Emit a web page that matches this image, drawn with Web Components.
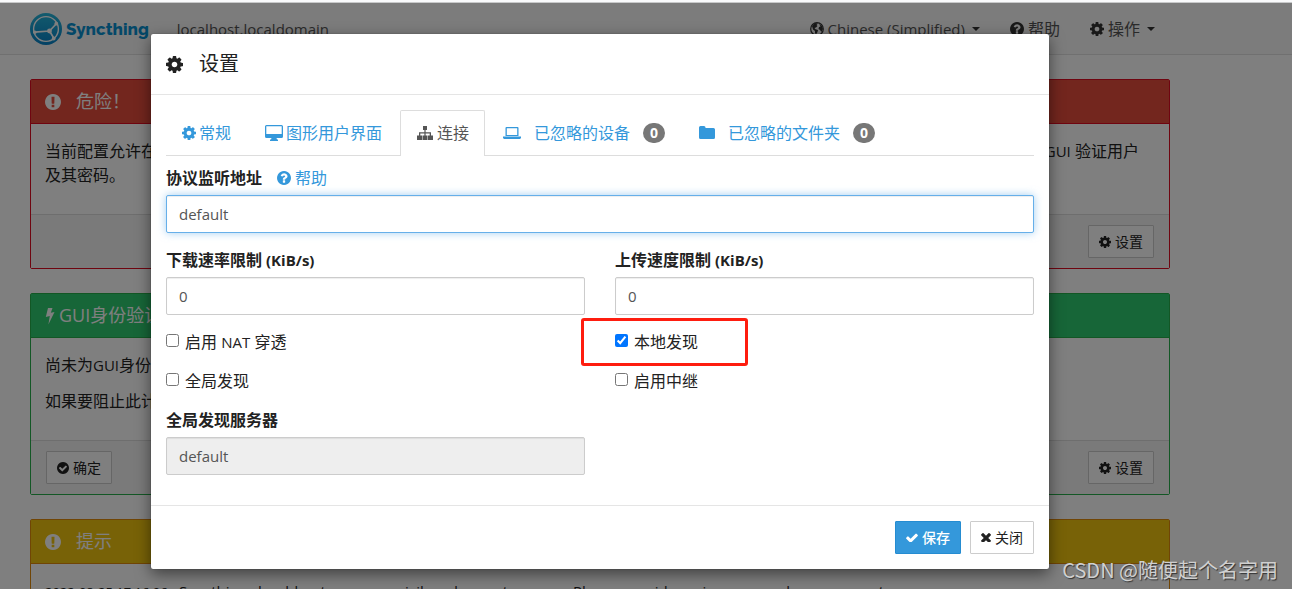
<!DOCTYPE html>
<html lang="zh-CN">
<head>
<meta charset="utf-8">
<title>Syncthing</title>
<style>
html, body { margin: 0; height: 100%; }
body { overflow: hidden; background: #fff; color: #222; font: 16px/24px "Open Sans", "Noto Sans CJK SC", sans-serif; }
</style>
</head>
<body>
<st-app></st-app>
<script>
const CIRCLE = 'M1664 896q0 209-103 385.500t-279.500 279.500-385.500 103-385.500-103-279.500-279.500-103-385.500 103-385.500 279.500-279.500 385.500-103 385.500 103 279.500 279.500 103 385.500z';
const ICONS = {
  cog: ['128 128 1536 1536', '<path d="M1152 896q0-106-75-181t-181-75-181 75-75 181 75 181 181 75 181-75 75-181zm512-109v222q0 12-8 23t-20 13l-185 28q-19 54-39 91 35 50 107 138 10 12 10 25t-9 23q-27 37-99 108t-94 71q-12 0-26-9l-138-108q-44 23-91 38-16 136-29 186-7 28-36 28h-222q-14 0-24.500-8.500t-11.500-21.500l-28-184q-49-16-90-37l-141 107q-10 9-25 9-14 0-25-11-126-114-165-168-7-10-7-23 0-12 8-23 15-21 51-66.500t54-70.500q-27-50-41-99l-183-27q-13-2-21-12.500t-8-23.500v-222q0-12 8-23t19-13l186-28q14-46 39-92-40-57-107-138-10-12-10-24 0-10 9-23 26-36 98.500-107.500t94.500-71.500q13 0 26 10l138 107q44-23 91-38 16-136 29-186 7-28 36-28h222q14 0 24.500 8.500t11.500 21.500l28 184q49 16 90 37l142-107q9-9 24-9 13 0 25 10 129 119 165 170 7 8 7 22 0 12-8 23-15 21-51 66.500t-54 70.500q26 50 41 98l183 28q13 2 21 12.500t8 23.500z"/>'],
  ok: ['128 128 1536 1536', '<path d="M1412 734q0-28-18-46l-91-90q-19-19-45-19t-45 19l-408 407-226-226q-19-19-45-19t-45 19l-91 90q-18 18-18 46 0 27 18 45l362 362q19 19 45 19 27 0 46-19l543-543q18-18 18-45z' + CIRCLE + '"/>'],
  help: ['128 128 1536 1536', '<path d="M1024 1376v-192q0-14-9-23t-23-9h-192q-14 0-23 9t-9 23v192q0 14 9 23t23 9h192q14 0 23-9t9-23zm256-672q0-88-55.500-163t-138.500-116-170-41q-243 0-371 213-15 24 8 42l132 100q7 6 19 6 16 0 25-12 53-68 86-92 34-24 86-24 48 0 85.500 26t37.500 59q0 38-20 61t-68 45q-63 28-115.500 86.500t-52.500 125.500v36q0 14 9 23t23 9h192q14 0 23-9t9-23q0-19 21.500-49.500t54.500-49.500q32-18 49-28.500t46-35 44.500-48 28-60.500 12.500-81z' + CIRCLE + '"/>'],
  warn: ['128 128 1536 1536', '<path d="M1024 1375v-190q0-14-9-23.500t-22-9.500h-192q-13 0-23 10t-10 23v190q0 13 10 23t23 10h192q13 0 22-9.500t9-23.500zm-2-344l18-621q0-12-10-18-10-8-24-8h-220q-14 0-24 8-10 6-10 18l17 621q0 10 10 17.500t24 7.500h185q14 0 23.500-7.500t10.500-17.500z' + CIRCLE + '"/>'],
  check: ['110 250 1572 1300', '<path d="M1671 566q0 40-28 68l-724 724-136 136q-28 28-68 28t-68-28l-136-136-362-362q-28-28-28-68t28-68l136-136q28-28 68-28t68 28l294 295 656-657q28-28 68-28t68 28l136 136q28 28 28 68z"/>'],
  times: ['290 366 1212 1188', '<path d="M1490 1322q0 40-28 68l-136 136q-28 28-68 28t-68-28l-294-294-294 294q-28 28-68 28t-68-28l-136-136q-28-28-28-68t28-68l294-294-294-294q-28-28-28-68t28-68l136-136q28-28 68-28t68 28l294 294 294-294q28-28 68-28t68 28l136 136q28 28 28 68t-28 68l-294 294 294 294q28 28 28 68z"/>'],
  bolt: ['0 0 10 18', '<path d="M3 1h4.500L5.800 5.800 9.500 5 3.400 17.500 4.800 9 .8 10z"/>'],
  desktop: ['0 0 18 16', '<path fill-rule="evenodd" d="M1.500 0h15A1.500 1.500 0 0 1 18 1.500v10a1.500 1.500 0 0 1-1.500 1.500h-5l.5 1.500h1V16H5v-1.500h1l.5-1.500h-5A1.500 1.500 0 0 1 0 11.500v-10A1.500 1.500 0 0 1 1.500 0zM1.300 1.300v7.700h15.400V1.300z"/>'],
  sitemap: ['-1 0 18 14', '<path d="M6 0h4v4H8.600v2.300H14V9.500h2V14h-5V9.500h1.700V7.500H8.600v2h1.900V14h-5V9.500h1.900v-2H3.300v2H5V14H0V9.500h2V6.300h5.400V4H6z"/>'],
  laptop: ['0 0 18 12', '<path fill-rule="evenodd" d="M3.500 0h11a1 1 0 0 1 1 1v8h-13V1a1 1 0 0 1 1-1zM3.800 1.200V8h10.400V1.200zM0 9.500h18V11l-1 1H1l-1-1z"/>'],
  folder: ['0 0 16 14', '<path d="M1.500 0H5a1.500 1.500 0 0 1 1.500 1.500V2h8A1.500 1.500 0 0 1 16 3.500v8a1.500 1.500 0 0 1-1.500 1.500h-13A1.500 1.500 0 0 1 0 11.500v-10A1.500 1.500 0 0 1 1.500 0z"/>'],
  globe: ['0 0 14 14', '<circle cx="7" cy="7" r="6.300" fill="none" stroke="currentColor" stroke-width="1.200"/><path d="M2 4l3-3 3 .5L6.500 3l1 1L6 5.500 4.500 6l1 1.200L8 8l-.5 2L6 12.500 5 11V9L3 7.500zM9 2l3 2 1 3-1.500 3-1.500-2-1.500-1L9 5l1.500-.5z"/>'],
  caret: ['0 0 8 4', '<path d="M0 0h8L4 4z"/>']
};

function define(name, html, setup) {
  const template = document.createElement('template');
  template.innerHTML = html;
  customElements.define(name, class extends HTMLElement {
    connectedCallback() {
      if (this.shadowRoot) return;
      this.attachShadow({ mode: 'open' }).append(template.content.cloneNode(true));
      if (setup) setup(this, this.shadowRoot);
    }
  });
}

define('st-icon', `<style>
  :host { display: inline-flex; align-items: center; justify-content: center; width: var(--w, 14px); flex: none; }
  svg { display: block; width: 100%; fill: currentColor; }
</style><svg aria-hidden="true"></svg>`, (el, root) => {
  const [box, shape] = ICONS[el.getAttribute('name')];
  const svg = root.querySelector('svg');
  svg.setAttribute('viewBox', box);
  svg.innerHTML = shape;
});

define('st-button', `<style>
  :host { display: inline-flex; }
  button { display: flex; align-items: center; gap: 4px; margin: 0; padding: 5px 10px; border: 1px solid #ccc; border-radius: 1px; background: #fff; color: #222; font: inherit; font-size: 14px; line-height: 21px; }
  st-icon { --w: 12px; }
  st-icon[name=times] { --w: 10px; }
  :host([primary]) button { background: #3498db; border-color: #258cd1; color: #fff; font-weight: 500; }
</style><button type="button"><slot></slot></button>`, (el, root) => {
  const icon = document.createElement('st-icon');
  icon.setAttribute('name', el.getAttribute('icon'));
  root.querySelector('button').prepend(icon);
});

define('st-logo', `<style>
  :host { display: flex; align-items: center; gap: 4px; color: #0891d1; font: 800 17px/24px Raleway, "Open Sans", sans-serif; }
  svg { display: block; width: 32px; height: 32px; }
</style>
<svg viewBox="0 0 32 32" aria-hidden="true">
  <defs><linearGradient id="g" x1="0" y1="1" x2="0" y2="0"><stop offset="0" stop-color="#0882c8"/><stop offset="1" stop-color="#26b6db"/></linearGradient></defs>
  <circle cx="16" cy="16" r="16" fill="url(#g)"/>
  <g fill="none" stroke="#fff" stroke-width="1.400"><circle cx="16" cy="16" r="12.400"/><path d="M26.500 10.500 19.500 18 4.500 19.200M19.500 18l4.500 7.500" stroke-width="1.700"/></g>
  <g fill="#fff"><circle cx="19.500" cy="18" r="2.400"/><circle cx="26.300" cy="10.700" r="1.900"/><circle cx="4.800" cy="19.200" r="1.800"/><circle cx="23.700" cy="25.500" r="1.900"/></g>
</svg><span>Syncthing</span>`);

define('st-navbar', `<style>
  :host { display: block; background: #f8f8f8; border-bottom: 1px solid #e0e0e0; color: #555; }
  nav { display: flex; align-items: center; box-sizing: border-box; max-width: 1140px; height: 51px; margin-left: 30px; }
  a { display: flex; align-items: center; gap: 4px; color: inherit; text-decoration: none; }
  .host { margin: 0 auto 0 28px; font-size: 15px; }
  .links { display: flex; gap: 30px; padding-right: 15px; }
  .latin { font-size: 15px; }
  .links st-icon { color: #333; }
  .links st-icon[name=caret] { --w: 8px; margin-left: 3px; }
</style>
<nav>
  <a href="#"><st-logo></st-logo></a>
  <p class="host">localhost.localdomain</p>
  <div class="links">
    <a class="latin" href="#"><st-icon name="globe"></st-icon>Chinese (Simplified)<st-icon name="caret"></st-icon></a>
    <a href="#"><st-icon name="help"></st-icon>帮助</a>
    <a href="#"><st-icon name="cog"></st-icon>操作<st-icon name="caret"></st-icon></a>
  </div>
</nav>`);

define('st-panel', `<style>
  :host { display: block; border: 1px solid var(--edge); border-radius: 2px; background: #fff; --edge: #df0b20; --fill: #e74c3c; }
  :host([kind=success]) { --edge: #27ae4b; --fill: #2ecc71; }
  :host([kind=warning]) { --edge: #e08a0b; --fill: #f1c40f; }
  header { display: flex; align-items: center; padding: 10px 14px; background: var(--fill); border-bottom: 1px solid var(--edge); color: #fff; }
  h3 { margin: 0; font-size: 18px; line-height: 23px; font-weight: 400; white-space: nowrap; }
  .body { padding: 15px 14px; }
  ::slotted(p) { margin: 0 0 12px; }
  footer { display: flex; padding: 10px 15px; border-top: 1px solid #ddd; background: #f5f5f5; }
  ::slotted([slot=end]) { margin-left: auto; }
</style>
<header><slot name="icon"></slot><h3></h3></header>
<div class="body"><slot></slot></div>
<footer><slot name="start"></slot><slot name="end"></slot></footer>`, (el, root) => {
  root.querySelector('h3').textContent = el.getAttribute('heading');
});

define('st-tab', `<style>
  :host { display: block; }
  a { display: flex; align-items: center; gap: 3px; padding: 10px 15px; border: 1px solid transparent; border-bottom: 0; border-radius: 2px 2px 0 0; color: #3498db; text-decoration: none; white-space: nowrap; line-height: 24px; }
  :host([wide]) a { gap: 13px; }
  :host([active]) a { position: relative; margin-bottom: -1px; padding-bottom: 11px; border-color: #ddd; background: #fff; color: #555; }
  span { min-width: 8px; padding: 3px 7px; border-radius: 10px; background: #777; color: #fff; font-size: 14px; font-weight: 700; line-height: 14px; text-align: center; }
</style><a href="#"><slot></slot></a>`, (el, root) => {
  if (el.hasAttribute('count')) {
    const badge = document.createElement('span');
    badge.textContent = el.getAttribute('count');
    root.querySelector('a').append(badge);
  }
});

define('st-field', `<style>
  :host { display: block; margin-bottom: 15px; }
  .top { display: flex; gap: 15px; height: 24px; margin-bottom: 5px; }
  label { display: flex; gap: 4px; font-weight: 700; color: #222; }
  small { font-size: 15px; }
  small:empty { display: none; }
  input { display: block; box-sizing: border-box; width: 100%; height: 38px; margin: 0; padding: 6px 12px; border: 1px solid #ccc; border-radius: 2px; background: #fff; color: #555; font: inherit; font-size: 15px; box-shadow: inset 0 1px 1px rgba(0,0,0,.07); outline: 0; }
  input:disabled { background: #eee; }
  :host([focused]) input { border-color: #66afe9; box-shadow: inset 0 1px 1px rgba(0,0,0,.07), 0 0 8px rgba(102,175,233,.6); }
</style>
<div class="top"><label for="box"><slot name="label"></slot> <small></small></label><slot></slot></div>
<input id="box" type="text">`, (el, root) => {
  const input = root.querySelector('input');
  input.value = el.getAttribute('value');
  input.disabled = el.hasAttribute('disabled');
  root.querySelector('small').textContent = el.getAttribute('unit') || '';
});

define('st-check', `<style>
  :host { display: block; position: relative; margin-bottom: 15px; }
  label { display: flex; align-items: flex-start; gap: 6px; }
  input { width: 13px; height: 13px; margin: 4px 0 0; accent-color: #0075ff; }
  .mark { display: none; position: absolute; left: -34px; top: -12px; width: 161px; height: 42px; border: 3px solid #fe1d0f; border-radius: 3px; pointer-events: none; }
  :host([marked]) .mark { display: block; }
</style>
<label><input type="checkbox"><span><slot></slot></span></label><div class="mark"></div>`, (el, root) => {
  root.querySelector('input').checked = el.hasAttribute('checked');
});

define('st-settings', `<style>
  :host { display: block; background: #fff; border-radius: 2px; box-shadow: 0 5px 15px rgba(0,0,0,.5), 0 0 1px rgba(0,0,0,.6); }
  header { display: flex; align-items: center; gap: 16px; padding: 15px; border-bottom: 1px solid #e5e5e5; }
  header st-icon { --w: 17px; }
  h4 { margin: 0; font-size: 20px; line-height: 30px; font-weight: 400; }
  main { padding: 15px; }
  .tabs { display: flex; gap: 2px; margin-bottom: 10px; border-bottom: 1px solid #ddd; }
  .big { --w: 18px; }
  .tabs st-icon[name=folder] { --w: 16px; }
  .grid { display: grid; grid-template-columns: 1fr 1fr; column-gap: 30px; }
  .help { display: flex; align-items: center; gap: 4px; color: #3498db; text-decoration: none; }
  footer { display: flex; justify-content: flex-end; gap: 9px; padding: 15px; border-top: 1px solid #e5e5e5; }
  small { font-size: 15px; line-height: 16px; }
</style>
<header><st-icon name="cog"></st-icon><h4>设置</h4></header>
<main>
  <div class="tabs">
    <st-tab><st-icon name="cog"></st-icon>常规</st-tab>
    <st-tab><st-icon class="big" name="desktop"></st-icon>图形用户界面</st-tab>
    <st-tab active><st-icon class="big" name="sitemap"></st-icon>连接</st-tab>
    <st-tab wide count="0"><st-icon class="big" name="laptop"></st-icon>已忽略的设备</st-tab>
    <st-tab wide count="0"><st-icon name="folder"></st-icon>已忽略的文件夹</st-tab>
  </div>
  <st-field focused value="default"><span slot="label">协议监听地址</span><a class="help" href="#"><st-icon name="help"></st-icon>帮助</a></st-field>
  <div class="grid">
    <st-field value="0" unit="(KiB/s)"><span slot="label">下载速率限制</span></st-field>
    <st-field value="0" unit="(KiB/s)"><span slot="label">上传速度限制</span></st-field>
    <st-check>启用 <small>NAT</small> 穿透</st-check>
    <st-check checked marked>本地发现</st-check>
    <st-check>全局发现</st-check>
    <st-check>启用中继</st-check>
    <st-field disabled value="default"><span slot="label">全局发现服务器</span></st-field>
  </div>
</main>
<footer><st-button primary icon="check">保存</st-button><st-button icon="times">关闭</st-button></footer>`);

define('st-app', `<style>
  :host { display: flex; flex-direction: column; height: 100vh; }
  .edge { height: 2px; flex: none; background: #f9fafb; border-bottom: 1px solid #c8c9ca; }
  .page { position: relative; flex: 1; min-height: 0; overflow: hidden; background: #fff; }
  .cards { display: flex; flex-direction: column; gap: 24px; max-width: 1140px; margin: 24px 30px 0; }
  .cards st-icon[slot=icon] { --w: 16px; margin-right: 15px; }
  .cards st-icon[name=bolt] { --w: 10px; margin-right: 4px; }
  .cards small { font-size: 15px; line-height: 16px; }
  .cards time { font-size: 13px; margin-right: 8px; }
  .keep { white-space: nowrap; }
  .backdrop { position: absolute; inset: 0; background: rgba(0,0,0,.5); }
  st-settings { position: absolute; top: 31px; left: 151px; width: calc(100% - 302px); max-width: 898px; }
  .credit { position: absolute; right: 14px; bottom: 5px; margin: 0; color: #d0d0d0; font: 20px/28px "Noto Sans CJK SC", sans-serif; text-shadow: 1px 1px 1px #333; }
</style>
<div class="edge"></div>
<div class="page">
  <st-navbar></st-navbar>
  <div class="cards">
    <st-panel heading="危险！"><st-icon slot="icon" name="warn"></st-icon>
      <p>当前配置允许在没有密码的情况下远程访问本机，任何知道此地址的人都可以读取和更改您的全部文件。为了确保数据安全，请立即设置 <small>Web</small> <small>GUI</small> 验证用户<span class="keep">及其密码。</span></p>
      <st-button slot="end" icon="cog">设置</st-button></st-panel>
    <st-panel kind="success" heading="GUI身份验证"><st-icon slot="icon" name="bolt"></st-icon>
      <p>尚未为<small>GUI</small>身份验证设置用户名和密码。</p><p>如果要阻止此计算机上的其他用户访问，请考虑设置身份验证。</p>
      <st-button slot="start" icon="ok">确定</st-button><st-button slot="end" icon="cog">设置</st-button></st-panel>
    <st-panel kind="warning" heading="提示"><st-icon slot="icon" name="warn"></st-icon>
      <p><time>2022-08-25 17:16:06:</time><small>Syncthing should not run as a privileged or system user. Please consider using a normal user account.</small></p></st-panel>
  </div>
  <div class="backdrop"></div>
  <st-settings></st-settings>
  <p class="credit">CSDN @随便起个名字用</p>
</div>`);
</script>
</body>
</html>
